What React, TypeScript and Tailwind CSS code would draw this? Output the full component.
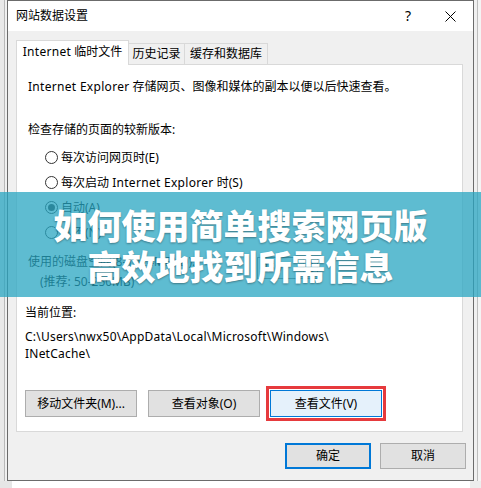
import React from 'react';

const Latin = ({ children }: { children: React.ReactNode }) => (
  <span className="tracking-[0.3px]">{children}</span>
);

const Radio = ({ label, checked = false }: { label: React.ReactNode; checked?: boolean }) => (
  <div className="flex h-[25px] items-center pl-[17px]">
    <span className="flex h-[13px] w-[13px] items-center justify-center rounded-full border border-[#333] bg-white">
      {checked && <span className="h-[7px] w-[7px] rounded-full bg-[#333]" />}
    </span>
    <span className="ml-[3px]">{label}</span>
  </div>
);

const Btn = ({ children, className = '' }: { children: React.ReactNode; className?: string }) => (
  <div className={`flex h-[27px] w-[112px] items-center justify-center border ${className}`}>{children}</div>
);

const App = () => {
  return (
    <div className="relative h-[488px] w-[481px] overflow-hidden bg-white font-['Noto_Sans','Noto_Sans_CJK_SC',sans-serif] text-[12px] text-black">
      <div className="flex h-[481px]">
        {/* window behind, left edge */}
        <div className="flex w-[7px]">
          <div className="w-[4px] bg-[#e9e9e9]" />
          <div className="w-px bg-[#b9b9b9]" />
          <div className="w-[2px] bg-[#f0f0f0]" />
        </div>

        {/* dialog */}
        <div className="flex w-[467px] flex-col border border-[#6b6b6b] bg-[#f0f0f0]">
          <div className="flex h-[30px] items-center bg-white pl-[8px]">
            <span>网站数据设置</span>
            <span className="flex-1" />
            <span className="text-[14px] leading-none">?</span>
            <svg className="ml-[34px] mr-[17px]" width="11" height="11" viewBox="0 0 11 11">
              <path d="M0.5 0.5 L10.5 10.5 M10.5 0.5 L0.5 10.5" stroke="#000" strokeWidth="1" />
            </svg>
          </div>

          <div className="flex flex-1 flex-col pl-[8px] pt-[9px]">
            {/* tabs */}
            <div className="relative z-10 mb-[-1px] flex h-[25px] items-end">
              <div className="flex h-[25px] w-[113px] items-center justify-center border border-b-0 border-[#d9d9d9] bg-white pb-[2px]">
                <Latin>Internet</Latin>&nbsp;临时文件
              </div>
              <div className="mb-px flex h-[21px] w-[56px] items-center justify-center border-t border-r border-[#d9d9d9]">
                历史记录
              </div>
              <div className="mb-px flex h-[21px] w-[83px] items-center justify-center border-t border-r border-[#d9d9d9]">
                缓存和数据库
              </div>
            </div>

            {/* panel */}
            <div className="flex h-[368px] w-[447px] flex-col border border-[#d9d9d9] bg-white pl-[8px] pt-[12px]">
              <div className="ml-[3px] h-[20px] leading-[20px]">
                <Latin>Internet Explorer</Latin> 存储网页、图像和媒体的副本以便以后快速查看。
              </div>
              <div className="ml-[3px] mt-[23px] h-[20px] leading-[20px]">检查存储的页面的较新版本:</div>
              <div className="mt-[5px] ml-[3px]">
                <Radio label="每次访问网页时(E)" />
                <Radio label={<>每次启动 <Latin>Internet Explorer</Latin> 时(S)</>} />
                <Radio label="自动(A)" checked />
                <Radio label="从不(N)" />
              </div>
              <div className="ml-[3px] mt-[7px] flex">
                <div>
                  <div className="h-[20px] leading-[20px]">使用的磁盘空间(8-1024MB)(D):</div>
                  <div className="ml-[12px] h-[20px] leading-[20px]">(推荐: 50-250MB)</div>
                </div>
                <div className="ml-[62px] mt-[5px] flex h-[22px] w-[61px] border border-[#7a7a7a] bg-white">
                  <span className="flex-1 pl-[3px] leading-[20px]">250</span>
                  <span className="flex w-[14px] flex-col border-l border-[#d0d0d0] text-[6px] leading-[10px] text-[#555]">
                    <span className="text-center">▲</span>
                    <span className="text-center">▼</span>
                  </span>
                </div>
              </div>
              <div className="mt-[11px] h-[20px] leading-[20px]">当前位置:</div>
              <div className="mt-[5px] leading-[17px] tracking-[0.22px]">
                C:\Users\nwx50\AppData\Local\Microsoft\Windows\
                <br />
                INetCache\
              </div>
              <div className="mt-[28px] flex">
                <Btn className="border-[#adadad] bg-[#e1e1e1]">移动文件夹(M)...</Btn>
                <Btn className="ml-[11px] border-[#adadad] bg-[#e1e1e1]">查看对象(O)</Btn>
                <div className="ml-[6px] mt-[-4px] border-[3px] border-[#e63a3d] p-px">
                  <Btn className="border-[#0078d7] bg-[#e5f1fb]">查看文件(V)</Btn>
                </div>
              </div>
            </div>

            <div className="mt-[11px] flex">
              <div className="ml-[269px] flex h-[26px] w-[86px] items-center justify-center border-2 border-[#0078d7] bg-[#e1e1e1]">确定</div>
              <div className="ml-[9px] flex h-[26px] w-[86px] items-center justify-center border border-[#adadad] bg-[#e1e1e1]">取消</div>
            </div>
          </div>
        </div>

        {/* window behind, right edge */}
        <div className="flex w-[7px]">
          <div className="w-[3px] bg-[#f0f0f0]" />
          <div className="w-px bg-[#bdbdbd]" />
          <div className="w-[3px] bg-[#f4f4f4]" />
        </div>
      </div>
      <div className="flex h-[7px]">
        <div className="w-[12px] bg-[#e6e6e6]" />
        <div className="flex-1 bg-white" />
        <div className="w-[11px] bg-[#ededed]" />
      </div>

      {/* caption banner over the screenshot */}
      <div className="absolute left-0 top-[192px] flex h-[105px] w-full flex-col items-center justify-center bg-[rgba(40,166,194,0.75)] font-['Noto_Sans_CJK_SC',sans-serif] text-[34px] font-black leading-[41px] text-white [text-shadow:0_1px_2px_rgba(0,0,0,0.35)]">
        <div>如何使用简单搜索网页版</div>
        <div>高效地找到所需信息</div>
      </div>
    </div>
  );
};

export default App;
